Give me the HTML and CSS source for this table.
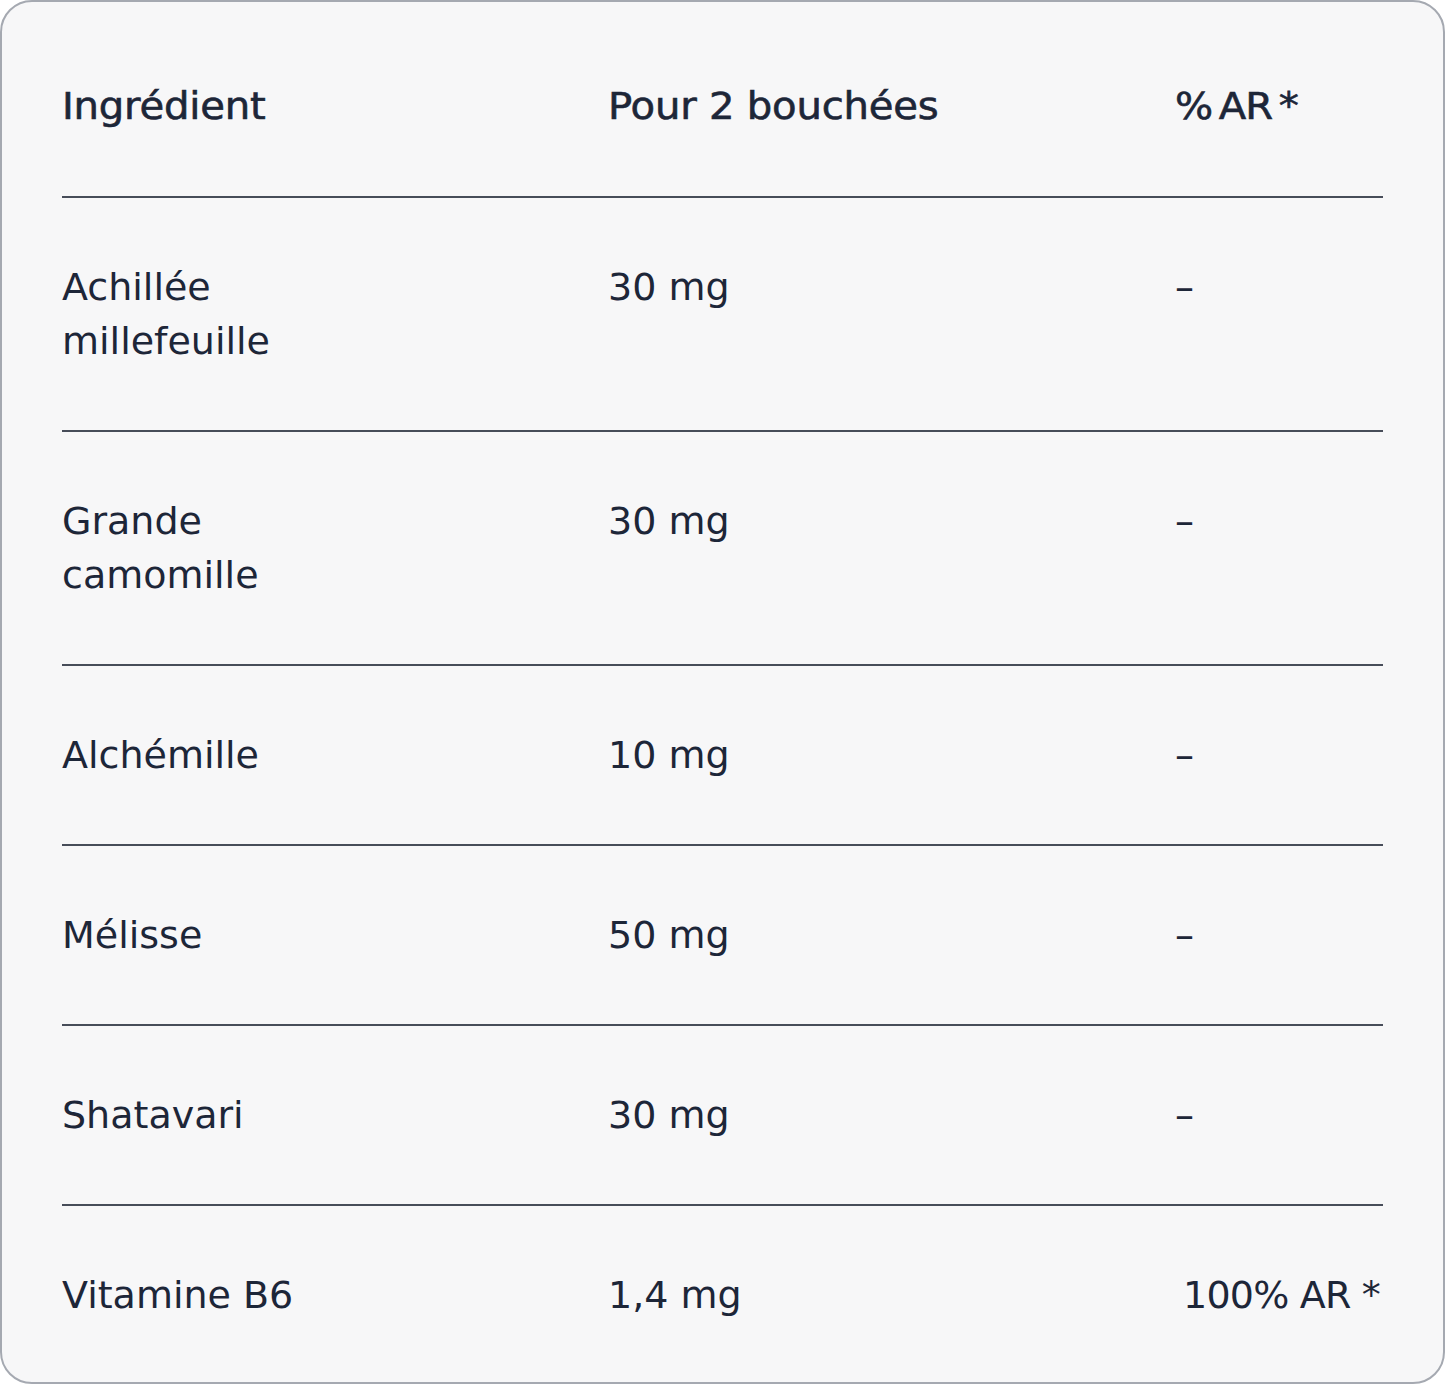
FILE: index.html
```html
<!DOCTYPE html>
<html lang="fr">
<head>
<meta charset="utf-8">
<title>Ingrédients</title>
<link rel="stylesheet" href="styles.css">
</head>
<body>
<div class="card">
  <div class="row head">
    <div class="cell"><span class="wide">Ingrédient</span></div>
    <div class="cell"><span class="wide">Pour 2 bouchées</span></div>
    <div class="cell"><span class="wide tight">% AR *</span></div>
  </div>
  <div class="row">
    <div class="cell name">Achillée<br>millefeuille</div>
    <div class="cell">30 mg</div>
    <div class="cell">–</div>
  </div>
  <div class="row">
    <div class="cell name">Grande<br>camomille</div>
    <div class="cell">30 mg</div>
    <div class="cell">–</div>
  </div>
  <div class="row">
    <div class="cell name">Alchémille</div>
    <div class="cell">10 mg</div>
    <div class="cell">–</div>
  </div>
  <div class="row">
    <div class="cell name">Mélisse</div>
    <div class="cell">50 mg</div>
    <div class="cell">–</div>
  </div>
  <div class="row">
    <div class="cell name">Shatavari</div>
    <div class="cell">30 mg</div>
    <div class="cell">–</div>
  </div>
  <div class="row last">
    <div class="cell name">Vitamine B6</div>
    <div class="cell">1,4 mg</div>
    <div class="cell ar">100% AR *</div>
  </div>
</div>
</body>
</html>
```

FILE: styles.css
```css
html, body {
  margin: 0;
  padding: 0;
  background: #ffffff;
}
.card {
  box-sizing: border-box;
  width: 1445px;
  height: 1384px;
  border: 2px solid #a5a9b1;
  border-radius: 32px;
  background: #f7f7f8;
  padding: 16px 60px 0;
  color: #1d2638;
  font-family: "DejaVu Sans", sans-serif;
  font-size: 38px;
  line-height: 54px;
}
.row {
  display: grid;
  grid-template-columns: 546px 567px 1fr;
  padding: 62px 0;
  border-bottom: 2px solid #474d59;
}
.row.last {
  border-bottom: none;
}
.cell {
  white-space: nowrap;
}
.head {
  font-size: 37px;
  -webkit-text-stroke: 0.6px #1d2638;
}
.wide {
  display: inline-block;
  transform: scaleX(1.085);
  transform-origin: left center;
  letter-spacing: -0.2px;
}
.tight {
  word-spacing: -5px;
  letter-spacing: -0.8px;
}
.ar {
  padding-left: 8px;
  letter-spacing: -0.8px;
}
```
